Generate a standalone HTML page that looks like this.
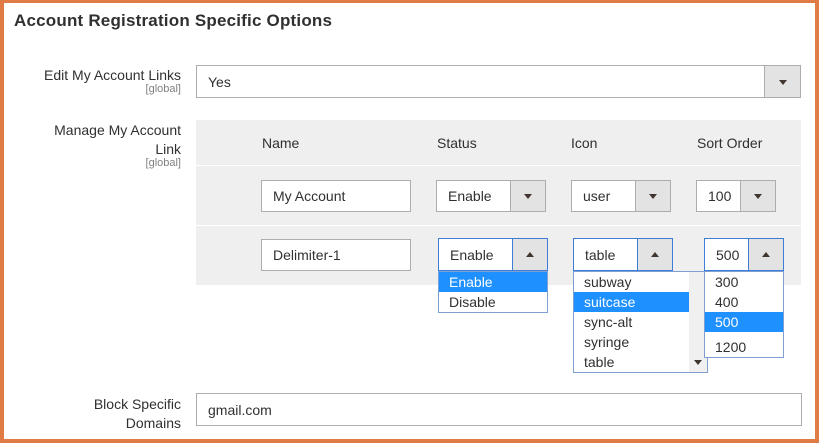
<!DOCTYPE html>
<html><head><meta charset="utf-8"><style>
*{box-sizing:border-box;margin:0;padding:0}
body{width:819px;height:443px;overflow:hidden;background:#fff;font-family:"Liberation Sans",sans-serif;color:#303030;position:relative}
.a{position:absolute}
.frame{position:absolute;left:0;top:0;width:819px;height:443px;border:solid #e07b45;border-width:3px 4px 4px 4px;z-index:10;pointer-events:none}
.lbl{position:absolute;right:638px;text-align:right;font-size:14px;color:#303030}
.g{position:absolute;right:638px;font-size:11px;color:#808080}
.box{position:absolute;background:#fff;border:1px solid #adadad;font-size:14px;padding-left:11px;display:flex;align-items:center}
.btn{position:absolute;top:0;bottom:0;right:0;background:#e3e3e3;border-left:1px solid #adadad}
.dn:after,.up:after{content:"";position:absolute;left:50%;top:50%;margin-left:-4px;border-left:4px solid transparent;border-right:4px solid transparent}
.dn:after{margin-top:-2px;border-top:5px solid #41362f}
.up:after{margin-top:-3px;border-bottom:5px solid #41362f}
.blue{border-color:#3c7dd8}
.blue .btn{border-left-color:#3c7dd8}
.list{position:absolute;background:#fff;border:1px solid #7f9fd3;font-size:14px}
.list .it{height:20px;line-height:20px;padding-left:10px}
.hl{background:#1e90ff;color:#fff}
.th{position:absolute;top:135px;font-size:14px;color:#303030}
</style></head><body>
<div class="frame"></div>
<div class="a" style="left:14px;top:11px;font-size:17px;font-weight:bold;color:#303030;letter-spacing:0.2px">Account Registration Specific Options</div>

<div class="lbl" style="top:67px">Edit My Account Links</div>
<div class="g" style="top:83px">[global]</div>
<div class="box" style="left:196px;top:65px;width:605px;height:33px">Yes<div class="btn dn" style="width:36px"></div></div>

<div class="lbl" style="top:121px;line-height:19px">Manage My Account<br>Link</div>
<div class="g" style="top:157px">[global]</div>

<div class="a" style="left:196px;top:120px;width:605px;height:165px;background:#efefef"></div>
<div class="a" style="left:196px;top:165px;width:605px;height:1px;background:#fff"></div>
<div class="a" style="left:196px;top:225px;width:605px;height:1px;background:#fff"></div>
<div class="th" style="left:262px">Name</div>
<div class="th" style="left:437px">Status</div>
<div class="th" style="left:571px">Icon</div>
<div class="th" style="left:697px">Sort Order</div>

<div class="box" style="left:261px;top:180px;width:150px;height:32px">My Account</div>
<div class="box" style="left:436px;top:180px;width:110px;height:32px">Enable<div class="btn dn" style="width:35px"></div></div>
<div class="box" style="left:571px;top:180px;width:100px;height:32px">user<div class="btn dn" style="width:35px"></div></div>
<div class="box" style="left:696px;top:180px;width:80px;height:32px">100<div class="btn dn" style="width:35px"></div></div>

<div class="box" style="left:261px;top:239px;width:150px;height:32px">Delimiter-1</div>
<div class="box blue" style="left:438px;top:238px;width:110px;height:33px">Enable<div class="btn up" style="width:35px"></div></div>
<div class="box blue" style="left:573px;top:238px;width:100px;height:33px">table<div class="btn up" style="width:35px"></div></div>
<div class="box blue" style="left:704px;top:238px;width:80px;height:33px">500<div class="btn up" style="width:35px"></div></div>

<div class="list" style="left:438px;top:271px;width:110px;height:42px"><div class="it hl">Enable</div><div class="it">Disable</div></div>
<div class="list" style="left:573px;top:271px;width:135px;height:102px"><div class="it">subway</div><div class="it hl" style="width:116px">suitcase</div><div class="it">sync-alt</div><div class="it">syringe</div><div class="it">table</div>
<div class="a" style="right:0;top:0;width:18px;height:100px;background:#f0f0f0"><div class="a" style="left:5px;bottom:7px;border-left:4px solid transparent;border-right:4px solid transparent;border-top:5px solid #41362f"></div></div></div>
<div class="list" style="left:704px;top:271px;width:80px;height:87px"><div class="it">300</div><div class="it">400</div><div class="it hl">500</div><div class="it" style="margin-top:5px">1200</div></div>

<div class="lbl" style="top:395px;line-height:19px">Block Specific<br>Domains</div>
<div class="box" style="left:196px;top:393px;width:606px;height:33px">gmail.com</div>
</body></html>
